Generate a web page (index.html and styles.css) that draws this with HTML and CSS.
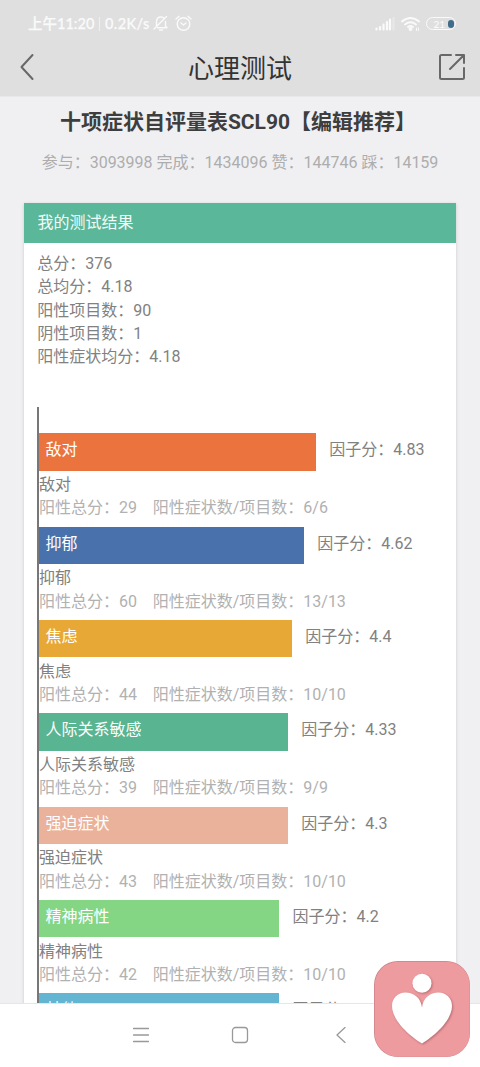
FILE: index.html
```html
<!DOCTYPE html>
<html lang="zh-CN">
<head>
<meta charset="utf-8">
<title>心理测试</title>
<link rel="stylesheet" href="styles.css">
</head>
<body>
<div class="phone">
  <header class="top">
    <div class="status">
      <span class="time">上午11:20</span><i class="divider"></i><span class="speed">0.2K/s</span>
      <svg class="bell" width="16" height="17" viewBox="0 0 16 17"><path d="M3.500 10.500V7C3.500 3.800 5.500 2 8 2c1 0 1.800.3 2.500.8M12.500 6.500V11l1.500 1.800H4.500M6.500 15h3M1 14 13.500 1.500"/></svg>
      <svg class="alarm" width="17" height="17" viewBox="0 0 17 17"><circle cx="8.500" cy="9" r="6.300"/><path d="M1 4 4 1.200M13 1.200 16 4M6 8l2.500 2L11 8"/></svg>
      <span class="spacer"></span>
      <svg class="signal" width="20" height="14" viewBox="0 0 20 14"><path d="M1.500 11.500v1M5 10v2.500M8.500 7.500v5M12 5v7.500M15 2.500v10"/><path class="faint" d="M18.500 1v11.500"/></svg>
      <svg class="wifi" width="20" height="16" viewBox="0 0 20 16"><path d="M1 5.500q8.500-7 17 0M4 8.500q5.500-4.500 11 0M7 11q2.500-2 5 0"/><circle cx="9.500" cy="13" r="1"/><path class="tiny" d="M15.500 12v2.500M17.500 12v2.500"/></svg>
      <span class="battery"><span>21</span><i></i></span>
    </div>
    <div class="nav">
      <svg width="14" height="28" viewBox="0 0 14 28"><path d="M12.500 2 1.500 14l11 12"/></svg>
      <h1>心理测试</h1>
      <svg width="28" height="28" viewBox="0 0 28 28"><path d="M13 2H3.500Q2 2 2 3.500v21Q2 26 3.500 26h21q1.500 0 1.500-1.500V15M18 2h8v8M26 2 12 16"/></svg>
    </div>
  </header>
  <main>
    <h2>十项症状自评量表SCL90【编辑推荐】</h2>
    <p class="stats">参与：3093998 完成：1434096 赞：144746 踩：14159</p>
    <section class="card">
      <h3>我的测试结果</h3>
      <div class="summary">
        <p>总分：376</p><p>总均分：4.18</p><p>阳性项目数：90</p><p>阴性项目数：1</p><p>阳性症状均分：4.18</p>
      </div>
      <div class="chart">
        <div class="item"><div class="line"><div class="bar orange">敌对</div><span>因子分：4.83</span></div><p>敌对</p><p class="detail"><span>阳性总分：29</span><span>阳性症状数/项目数：6/6</span></p></div>
        <div class="item"><div class="line"><div class="bar blue">抑郁</div><span>因子分：4.62</span></div><p>抑郁</p><p class="detail"><span>阳性总分：60</span><span>阳性症状数/项目数：13/13</span></p></div>
        <div class="item"><div class="line"><div class="bar yellow">焦虑</div><span>因子分：4.4</span></div><p>焦虑</p><p class="detail"><span>阳性总分：44</span><span>阳性症状数/项目数：10/10</span></p></div>
        <div class="item"><div class="line"><div class="bar green">人际关系敏感</div><span>因子分：4.33</span></div><p>人际关系敏感</p><p class="detail"><span>阳性总分：39</span><span>阳性症状数/项目数：9/9</span></p></div>
        <div class="item"><div class="line"><div class="bar peach">强迫症状</div><span>因子分：4.3</span></div><p>强迫症状</p><p class="detail"><span>阳性总分：43</span><span>阳性症状数/项目数：10/10</span></p></div>
        <div class="item"><div class="line"><div class="bar lime">精神病性</div><span>因子分：4.2</span></div><p>精神病性</p><p class="detail"><span>阳性总分：42</span><span>阳性症状数/项目数：10/10</span></p></div>
        <div class="item"><div class="line"><div class="bar sky">其他</div><span>因子分</span></div></div>
      </div>
    </section>
  </main>
  <footer>
    <svg width="16" height="16" viewBox="0 0 16 16"><path d="M.5 1.500h15M.5 8h15M.5 14.500h15"/></svg>
    <svg class="home" width="18" height="18" viewBox="0 0 18 18"><rect x="1.500" y="1.500" width="15" height="15" rx="3"/></svg>
    <svg width="10" height="16" viewBox="0 0 10 16"><path d="M9 .5 1 8l8 7.500"/></svg>
  </footer>
  <svg class="badge" width="98" height="98" viewBox="0 0 98 98">
    <rect class="edge" x="1" y="1" width="96" height="96" rx="24"/>
    <rect class="tile" x="1.700" y="1.700" width="95" height="95" rx="23.500"/>
    <g class="figure"><circle cx="49" cy="23.300" r="9.500"/><path d="M49 83.500C38 77 19 61 19 46c0-8 6-13.500 13.500-13.500C41 32.500 48 38 49 47.500 50 38 57 32.500 65.500 32.500 73 32.500 79 38 79 46c0 15-19 31-30 37.500Z"/></g>
  </svg>
</div>
</body>
</html>
```
FILE: styles.css
```css
* { box-sizing: border-box; margin: 0; padding: 0; }
body { font: 16px/23.35px Roboto, "Noto Sans CJK SC", sans-serif; color: #818181; }
.phone { position: relative; display: flex; flex-direction: column; width: 480px; height: 1067px; overflow: hidden; background: #f0f0f3; }
svg { display: block; flex: none; fill: none; stroke-linecap: round; stroke-linejoin: round; }
.top { flex: none; height: 97px; background: #dfdfdf; border-bottom: 1px solid #e8e8e8; }
.status { display: flex; align-items: center; height: 40px; padding: 7px 24px 0 28px; color: #fafafa; font: 500 14px/20px Lato, "Noto Sans CJK SC", sans-serif; }
.status svg { stroke: #fafafa; stroke-width: 1.4; }
.time { width: 68px; font-size: 14.500px; white-space: nowrap; }
.divider { width: 1px; height: 14px; margin: 0 5px 0 3px; background: #f0f0f0; }
.speed { width: 46px; font-size: 14.500px; letter-spacing: .4px; }
.time, .speed { -webkit-text-stroke: .25px #fafafa; }
.bell { margin-left: 2px; }
.alarm { margin-left: 6px; }
.spacer { flex: 1; }
.status .signal { stroke-width: 2.2; margin-right: 6px; }
.status .signal .faint { stroke: #e8e8e8; }
.status .wifi { stroke-width: 1.9; margin-right: 5px; }
.wifi circle { fill: #fafafa; }
.wifi .tiny { stroke-width: 1; }
.battery { display: flex; align-items: center; justify-content: flex-end; width: 30px; height: 13px; border: 1.500px solid #fafafa; border-radius: 7px; font-size: 10px; line-height: 10px; }
.battery i { width: 6px; height: 8px; margin: 0 1px 0 3px; border-radius: 3px; background: #3f6c8a; }
.nav { display: flex; align-items: center; justify-content: space-between; height: 54px; padding: 0 14px 0 20px; }
.nav svg { stroke: #686868; stroke-width: 2; }
.nav h1 { color: #333; font-size: 26px; font-weight: 400; line-height: 40px; padding: 4px 0 0 8px; }
main { flex: 1; min-height: 0; overflow: hidden; padding: 10px 24px 0; }
h2 { padding-right: 4px; color: #3e3e3e; font-size: 21px; line-height: 30px; text-align: center; white-space: nowrap; }
.stats { margin-top: 14px; color: #adadad; text-align: center; white-space: nowrap; line-height: 24px; }
.card { height: 900px; margin-top: 28.300px; background: #fff; box-shadow: 0 1px 3px #c8c8c8; }
h3 { height: 40px; padding-left: 13.500px; background: #5bb79a; color: #f1fcf7; font-size: 16px; font-weight: 400; line-height: 40px; }
.summary { padding: 8.700px 13.300px 0; height: 163.500px; }
.chart { margin-left: 13px; border-left: 2px solid #777; padding-top: 26.500px; height: 700px; }
.item { height: 93.370px; }
.line { display: flex; height: 37.400px; align-items: flex-start; gap: 13.200px; line-height: 33.600px; white-space: nowrap; }
.bar { height: 37.400px; padding-left: 6.500px; color: #fff; }
.item p { line-height: 23.350px; white-space: nowrap; }
.item > p:first-of-type { padding-top: 2.200px; }
.item .detail { display: flex; gap: 15.700px; color: #b1b1b1; }
.orange { width: 277px; background: #ea733e; }
.blue { width: 265px; background: #4972ac; }
.yellow { width: 253px; background: #e8a836; }
.green { width: 249px; background: #58b491; }
.peach { width: 249px; background: #ebb29b; }
.lime { width: 240.400px; background: #84d584; }
.sky { width: 240.400px; background: #64b5d1; }
footer { display: flex; flex: none; align-items: center; justify-content: space-between; height: 64px; padding: 0 134px 2px 133px; border-top: 1px solid #e6e6e6; background: #fff; }
footer svg { stroke: #999; stroke-width: 1.3; }
.home { margin-right: 6px; }
.badge { position: absolute; left: 373px; top: 960px; }
.edge { fill: #cb8288; }
.tile { fill: #ee9b9f; }
.figure { fill: #fff; filter: drop-shadow(1px 1px 1px #b76c73); }
```
